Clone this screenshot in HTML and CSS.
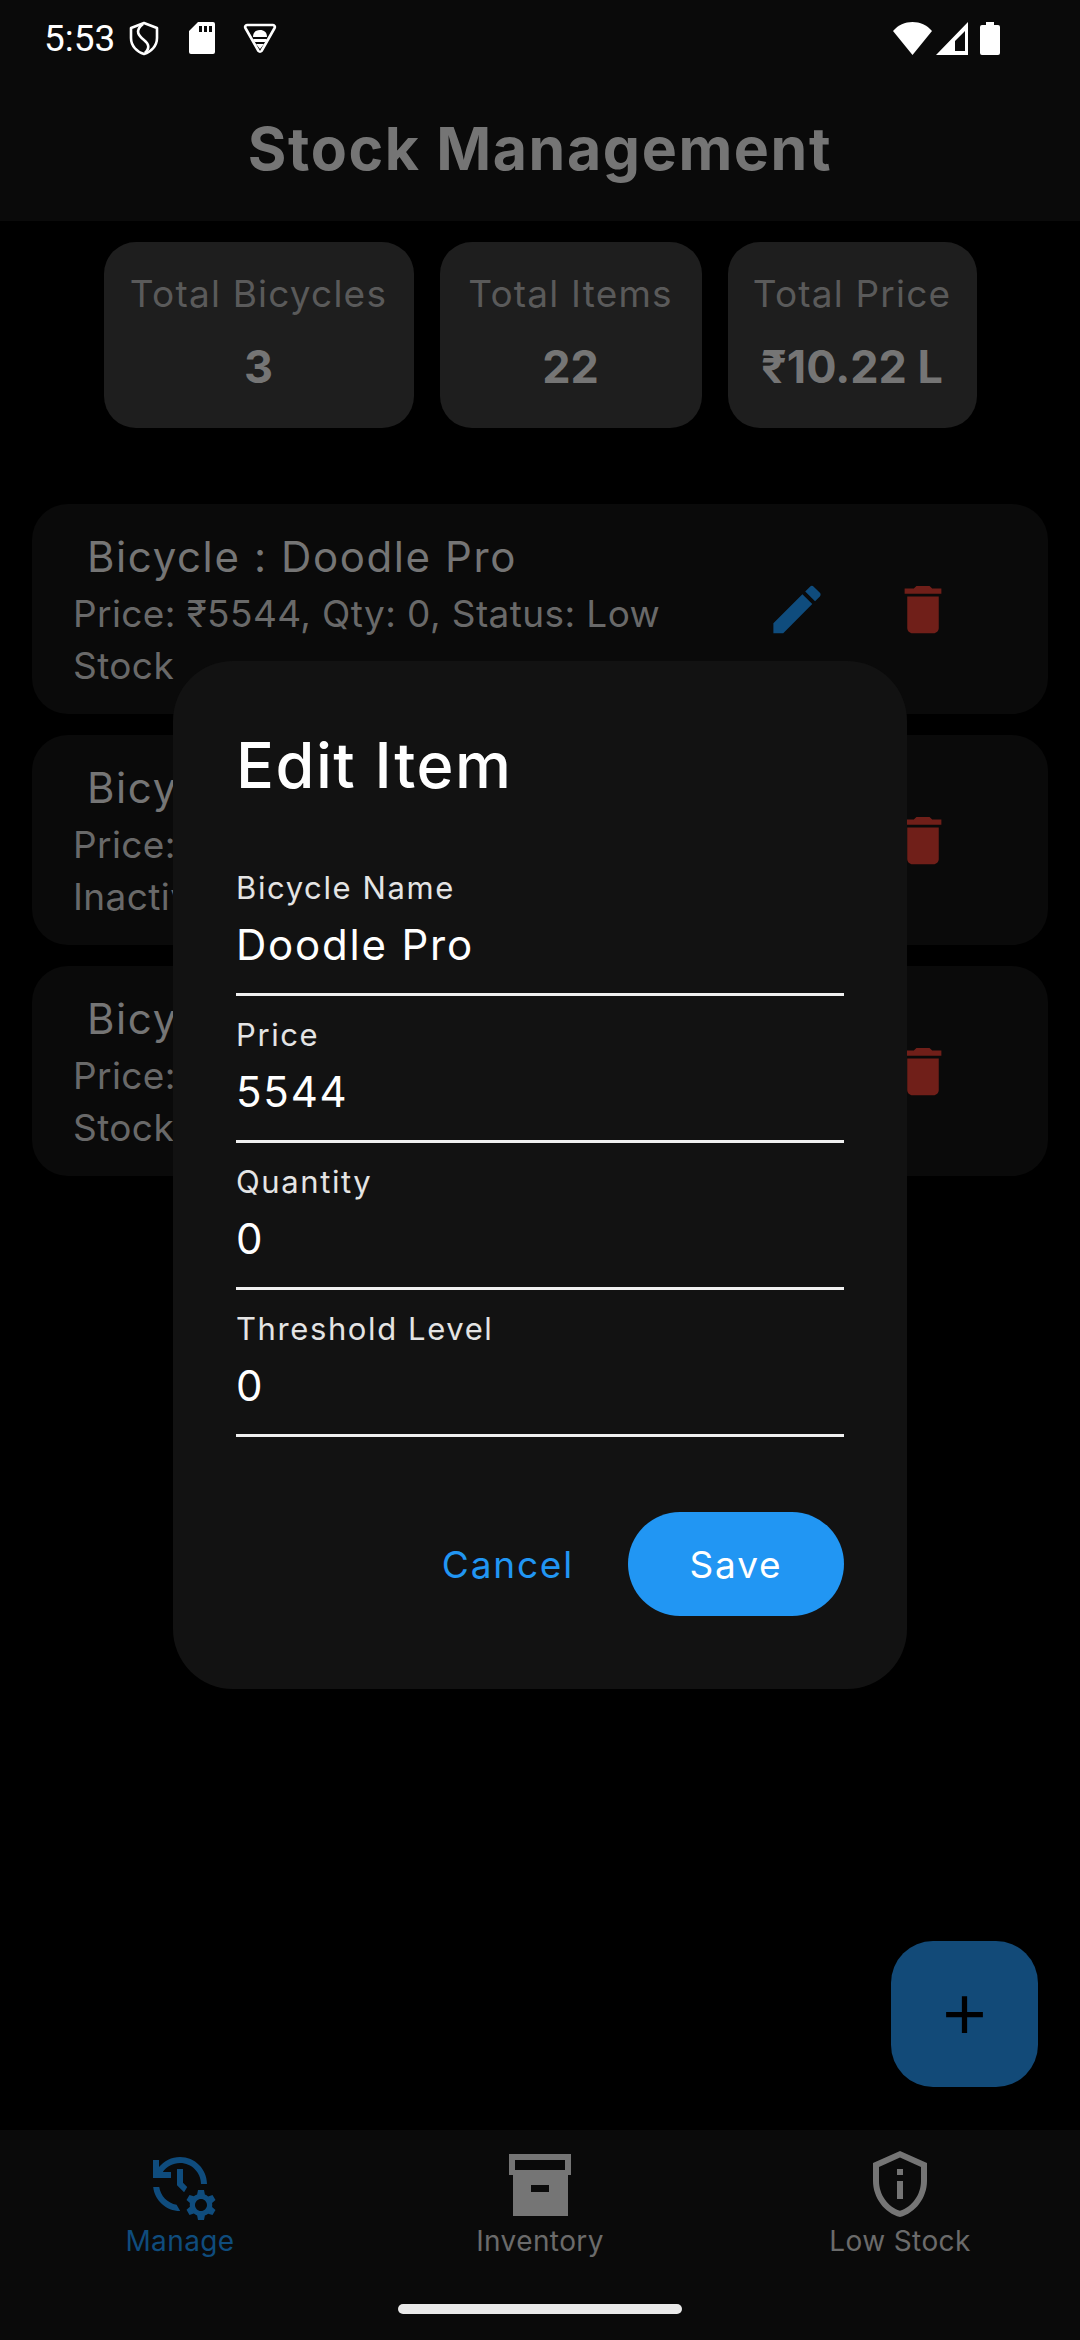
FILE: index.html
```html
<!DOCTYPE html>
<html lang="en">
<head>
    <meta charset="UTF-8">
    <meta name="viewport" content="width=device-width, initial-scale=1.0">
    <title>Stock Management</title>
    <link rel="stylesheet" href="styles.css">
</head>
<body>
<div class="screen">
    <div class="status-bar">
        <span class="time">5:53</span>
        <svg class="ic-shield" viewBox="0 0 30 35"><path d="M15 2 L28 7 V17 C28 25 22 31 15 33 C8 31 2 25 2 17 V7 Z" fill="none" stroke="#fff" stroke-width="2.6" stroke-linejoin="round"/><path d="M14 3 C5 10 10 15 15 19 C20 23 21 27 16 32" fill="none" stroke="#fff" stroke-width="2.6"/></svg>
        <svg class="ic-sd" viewBox="0 0 26 32"><path fill-rule="evenodd" d="M9 0H24a2 2 0 0 1 2 2V30a2 2 0 0 1-2 2H2a2 2 0 0 1-2-2V9ZM10 4V10H13V4ZM15 4V10H18V4ZM20 4V10H23V4Z" fill="#fff"/></svg>
        <svg class="ic-tri" viewBox="0 0 34 31"><path d="M4 2 H30 A2 2 0 0 1 31.6 5 L18.5 28 A2 2 0 0 1 15.5 28 L2.4 5 A2 2 0 0 1 4 2 Z" fill="none" stroke="#fff" stroke-width="2.6" stroke-linejoin="round"/><path d="M10 14 C10 9 13 7 17 7 C21 7 24 9 24 14 Z M10 16 H24 L22.5 19 H11.5 Z M13 21 H21 L17 26 Z" fill="#fff"/></svg>
        <span class="status-right">
            <svg class="ic-wifi" viewBox="0 0 39 33"><path d="M0 9 C5 3 12 0 19.5 0 C27 0 34 3 39 9 L19.5 33 Z" fill="#fff"/></svg>
            <svg class="ic-signal" viewBox="0 0 32 33"><path fill-rule="evenodd" d="M32 0V33H0ZM29 9 19 19V29H29Z" fill="#fff"/></svg>
            <svg class="ic-battery" viewBox="0 0 20 33"><path d="M6 0H14V3H18A2 2 0 0 1 20 5V31A2 2 0 0 1 18 33H2A2 2 0 0 1 0 31V5A2 2 0 0 1 2 3H6Z" fill="#fff"/></svg>
        </span>
    </div>

    <header class="app-bar">Stock Management</header>

    <main class="content">
        <section class="stats">
            <div class="stat">
                <div class="stat-label">Total Bicycles</div>
                <div class="stat-value">3</div>
            </div>
            <div class="stat">
                <div class="stat-label">Total Items</div>
                <div class="stat-value">22</div>
            </div>
            <div class="stat">
                <div class="stat-label">Total Price</div>
                <div class="stat-value">₹10.22 L</div>
            </div>
        </section>

        <section class="list">
            <article class="item">
                <div class="item-text">
                    <div class="item-name">Bicycle : Doodle Pro</div>
                    <div class="item-meta">Price: ₹5544, Qty: 0, Status: Low Stock</div>
                </div>
                <div class="item-actions">
                    <svg class="icon edit" viewBox="0 0 24 24"><path d="M3 17.25V21h3.75L17.81 9.94l-3.75-3.75L3 17.25zM20.71 7.04c.39-.39.39-1.02 0-1.41l-2.34-2.34c-.39-.39-1.02-.39-1.41 0l-1.83 1.83 3.75 3.75 1.83-1.83z"/></svg>
                    <svg class="icon delete" viewBox="0 0 24 24"><path d="M6 19c0 1.1.9 2 2 2h8c1.1 0 2-.9 2-2V7H6v12zM19 4h-3.5l-1-1h-5l-1 1H5v2h14V4z"/></svg>
                </div>
            </article>
            <article class="item">
                <div class="item-text">
                    <div class="item-name">Bicycle : Roadster</div>
                    <div class="item-meta">Price: ₹8200, Qty: 12, Status: Inactive</div>
                </div>
                <div class="item-actions">
                    <svg class="icon edit" viewBox="0 0 24 24"><path d="M3 17.25V21h3.75L17.81 9.94l-3.75-3.75L3 17.25zM20.71 7.04c.39-.39.39-1.02 0-1.41l-2.34-2.34c-.39-.39-1.02-.39-1.41 0l-1.83 1.83 3.75 3.75 1.83-1.83z"/></svg>
                    <svg class="icon delete" viewBox="0 0 24 24"><path d="M6 19c0 1.1.9 2 2 2h8c1.1 0 2-.9 2-2V7H6v12zM19 4h-3.5l-1-1h-5l-1 1H5v2h14V4z"/></svg>
                </div>
            </article>
            <article class="item">
                <div class="item-text">
                    <div class="item-name">Bicycle : Trail X</div>
                    <div class="item-meta">Price: ₹9100, Qty: 10, Status: Low Stock</div>
                </div>
                <div class="item-actions">
                    <svg class="icon edit" viewBox="0 0 24 24"><path d="M3 17.25V21h3.75L17.81 9.94l-3.75-3.75L3 17.25zM20.71 7.04c.39-.39.39-1.02 0-1.41l-2.34-2.34c-.39-.39-1.02-.39-1.41 0l-1.83 1.83 3.75 3.75 1.83-1.83z"/></svg>
                    <svg class="icon delete" viewBox="0 0 24 24"><path d="M6 19c0 1.1.9 2 2 2h8c1.1 0 2-.9 2-2V7H6v12zM19 4h-3.5l-1-1h-5l-1 1H5v2h14V4z"/></svg>
                </div>
            </article>
        </section>
    </main>

    <nav class="bottom-nav">
        <div class="nav-item active">
            <svg class="nav-icon" viewBox="0 0 24 24"><path d="M22.69 18.37l1.14-1-1-1.73-1.45.49c-.32-.27-.68-.48-1.08-.63L20 14h-2l-.3 1.49c-.4.15-.76.36-1.08.63l-1.45-.49-1 1.73 1.14 1c-.08.5-.08.76 0 1.26l-1.14 1 1 1.73 1.45-.49c.32.27.68.48 1.08.63L18 24h2l.3-1.49c.4-.15.76-.36 1.08-.63l1.45.49 1-1.73-1.14-1c.08-.51.08-.77 0-1.27zM19 21c-1.1 0-2-.9-2-2s.9-2 2-2 2 .9 2 2-.9 2-2 2zM11 7v5.41l2.36 2.36 1.04-1.79-1.4-1.39V7h-2zm10 5c0-4.97-4.03-9-9-9-2.83 0-5.35 1.32-7 3.36V4H3v6h6V8H6.26C7.53 6.19 9.63 5 12 5c3.86 0 7 3.14 7 7h2zm-10.14 6.91c-2.99-.49-5.35-2.9-5.78-5.91H3.06c.5 4.5 4.31 8 8.94 8h.07l-1.21-2.09z"/></svg>
            <span>Manage</span>
        </div>
        <div class="nav-item">
            <svg class="nav-icon" viewBox="0 0 72 72"><path fill-rule="evenodd" d="M5 6H67V27H64V68H9V27H5ZM11 12V22H61V12ZM27 37V44H45V37Z"/></svg>
            <span>Inventory</span>
        </div>
        <div class="nav-item">
            <svg class="nav-icon" viewBox="0 0 24 24"><path d="M12 3.19l7 3.11V11c0 4.52-2.98 8.69-7 9.93-4.02-1.24-7-5.41-7-9.93V6.3l7-3.11M12 1L3 5v6c0 5.55 3.84 10.74 9 12 5.16-1.26 9-6.45 9-12V5l-9-4zm-1 6h2v2h-2zm0 4h2v6h-2z"/></svg>
            <span>Low Stock</span>
        </div>
    </nav>

    <button class="fab"><svg viewBox="0 0 24 24"><path d="M19 13h-6v6h-2v-6H5v-2h6V5h2v6h6v2z"/></svg></button>

    <div class="dialog">
        <h2 class="dialog-title">Edit Item</h2>
        <div class="field">
            <label>Bicycle Name</label>
            <div class="field-value">Doodle Pro</div>
        </div>
        <div class="field">
            <label>Price</label>
            <div class="field-value">5544</div>
        </div>
        <div class="field">
            <label>Quantity</label>
            <div class="field-value">0</div>
        </div>
        <div class="field">
            <label>Threshold Level</label>
            <div class="field-value">0</div>
        </div>
        <div class="dialog-actions">
            <button class="btn-cancel">Cancel</button>
            <button class="btn-save">Save</button>
        </div>
    </div>

    <div class="home-bar"></div>
</div>
</body>
</html>
```

FILE: styles.css
```css
* {
    box-sizing: border-box;
}

body {
    margin: 0;
    background-color: #000;
    font-family: Inter, "Noto Sans", sans-serif;
}

.screen {
    position: relative;
    width: 1080px;
    height: 2340px;
    display: flex;
    flex-direction: column;
    overflow: hidden;
    background-color: #000;
}

/* status bar */
.status-bar {
    height: 76px;
    flex: none;
    display: flex;
    align-items: center;
    padding: 0 80px 0 44px;
    background-color: #0a0a0a;
}
.time {
    font-family: Roboto, sans-serif;
    font-size: 37px;
    color: #fff;
    width: 68px;
    margin-right: 17px;
}
.ic-shield { width: 30px; height: 35px; margin-right: 30px; }
.ic-sd { width: 26px; height: 32px; margin-right: 28px; }
.ic-tri { width: 34px; height: 31px; }
.status-right {
    margin-left: auto;
    display: flex;
    align-items: center;
}
.ic-wifi { width: 39px; height: 33px; margin-right: 4px; }
.ic-signal { width: 32px; height: 33px; margin-right: 12px; }
.ic-battery { width: 20px; height: 33px; }

/* app bar */
.app-bar {
    height: 145px;
    flex: none;
    display: flex;
    align-items: center;
    justify-content: center;
    background-color: #0a0a0a;
    color: #757575;
    font-size: 59px;
    font-weight: 700;
    letter-spacing: 1.6px;
}

.content {
    flex: 1;
    padding: 21px 32px 0;
}

/* totals */
.stats {
    display: grid;
    grid-template-columns: 310px 262px 249px;
    justify-content: center;
    column-gap: 26px;
}
.stat {
    height: 186px;
    background-color: #1e1e1e;
    border-radius: 32px;
    display: flex;
    flex-direction: column;
    align-items: center;
    padding-top: 30px;
}
.stat-label {
    font-size: 37px;
    line-height: 44px;
    letter-spacing: 1.2px;
    color: #5a5a5a;
    white-space: nowrap;
}
.stat-value {
    margin-top: 23px;
    font-size: 45px;
    line-height: 56px;
    font-weight: 700;
    color: #757575;
    white-space: nowrap;
}

/* list */
.list {
    margin-top: 76px;
    display: flex;
    flex-direction: column;
    gap: 21px;
}
.item {
    height: 210px;
    background-color: #0a0a0a;
    border-radius: 36px;
    display: flex;
    align-items: center;
    padding: 0 62px 0 41px;
}
.item-text {
    flex: 1;
    padding-top: 5px;
    padding-right: 30px;
}
.item-name {
    font-size: 42px;
    line-height: 52px;
    letter-spacing: 1.6px;
    padding-left: 14px;
    margin-bottom: 5px;
    color: #757575;
}
.item-meta {
    font-size: 37px;
    line-height: 52px;
    letter-spacing: 0.4px;
    color: #696969;
}
.item-actions {
    display: flex;
    flex: none;
}
.icon {
    width: 126px;
    height: 63px;
}
.icon.edit { fill: #0f4c7d; }
.icon.delete { fill: #701f19; }

/* bottom nav */
.bottom-nav {
    height: 210px;
    flex: none;
    display: grid;
    grid-template-columns: repeat(3, 1fr);
    background-color: #0a0a0a;
    padding-top: 18px;
}
.nav-item {
    display: flex;
    flex-direction: column;
    align-items: center;
    color: #6b6b6b;
    fill: #757575;
    font-size: 28px;
    line-height: 42px;
    letter-spacing: 0.4px;
}
.nav-item.active {
    color: #0f4c7d;
    fill: #0f4c7d;
}
.nav-icon {
    width: 72px;
    height: 72px;
}

.fab {
    position: absolute;
    left: 891px;
    top: 1941px;
    width: 147px;
    height: 146px;
    border: none;
    border-radius: 42px;
    background-color: #124a78;
    display: flex;
    align-items: center;
    justify-content: center;
    padding: 0;
}
.fab svg {
    width: 63px;
    height: 63px;
    fill: #000;
}

/* edit dialog */
.dialog {
    position: absolute;
    left: 173px;
    top: 661px;
    width: 734px;
    height: 1028px;
    padding: 64px 63px 0 63px;
    background-color: #121212;
    border-radius: 60px;
}
.dialog-title {
    margin: 0 0 44px;
    font-size: 63px;
    line-height: 80px;
    font-weight: 500;
    letter-spacing: 1.5px;
    color: #fff;
}
.field {
    height: 147px;
    padding-top: 19px;
    border-bottom: 3px solid #f0f0f0;
}
.field label {
    display: block;
    font-size: 31px;
    line-height: 40px;
    letter-spacing: 1.6px;
    color: #e4e4e4;
}
.field-value {
    margin-top: 7px;
    font-size: 42px;
    line-height: 60px;
    letter-spacing: 1.8px;
    color: #fff;
}
.dialog-actions {
    display: flex;
    align-items: center;
    justify-content: flex-end;
    margin-top: 75px;
}
.btn-cancel,
.btn-save {
    font-family: inherit;
    font-size: 37px;
    letter-spacing: 1.8px;
    border: none;
    padding: 0;
}
.btn-cancel {
    background: none;
    color: #2196f3;
    margin-right: 54px;
}
.btn-save {
    width: 216px;
    height: 104px;
    border-radius: 52px;
    background-color: #2196f3;
    color: #fff;
}

.home-bar {
    position: absolute;
    left: 398px;
    top: 2304px;
    width: 284px;
    height: 10px;
    border-radius: 5px;
    background-color: #eaeaea;
}
```
